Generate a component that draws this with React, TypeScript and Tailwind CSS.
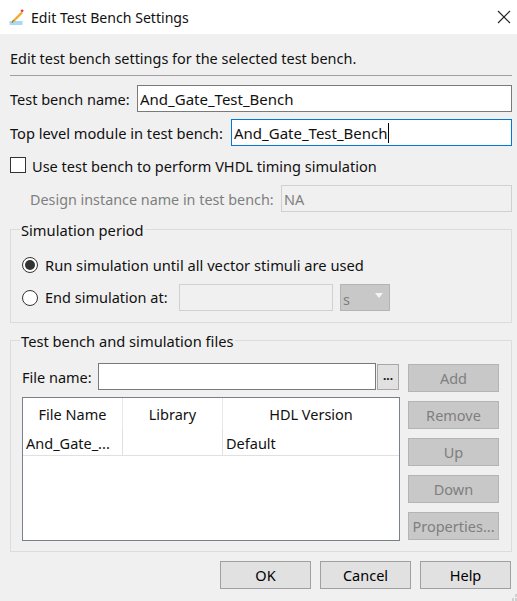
const labelFont = "font-['Noto_Sans',sans-serif] text-[14.5px] leading-[19px]";

function GrayButton({ label }: { label: string }) {
  return (
    <div className="flex h-[28px] w-[91px] items-center justify-center whitespace-nowrap border border-[#b4b4b4] bg-[#c8c8c8] text-[#7f7f7f]">
      {label}
    </div>
  );
}

function DialogButton({ label }: { label: string }) {
  return (
    <div className="flex h-[28px] w-[91px] items-center justify-center border border-[#a0a0a0] bg-[#e1e1e1] text-[#000]">
      {label}
    </div>
  );
}

function Radio({ checked }: { checked?: boolean }) {
  return (
    <div className="flex h-[16px] w-[16px] shrink-0 items-center justify-center rounded-full border border-[#333] bg-white">
      {checked && <div className="h-[10px] w-[10px] rounded-full bg-[#333]" />}
    </div>
  );
}

export default function App() {
  return (
    <div className={`relative h-[601px] w-[517px] overflow-hidden bg-[#f0f0f0] text-[#111] ${labelFont}`}>
      {/* title bar */}
      <div className="flex h-[34px] items-center justify-between bg-white pl-[9px] pr-[5px]">
        <div className="flex items-center gap-[7px] text-[14.1px]">
          <svg width="15" height="16" viewBox="0 0 15 16">
            <rect x="0.5" y="12" width="13" height="4" fill="#a8daf2" />
            <path d="M4 12.5 L13 3.5" stroke="#f2a833" strokeWidth="2.4" />
            <path d="M12.2 2.7 L14 1" stroke="#e23a3a" strokeWidth="2.4" />
            <path d="M3 14 L4.5 11" stroke="#8a6a3a" strokeWidth="1" />
          </svg>
          <span>Edit Test Bench Settings</span>
        </div>
        <svg width="14" height="14" viewBox="0 0 14 14" className="mr-px">
          <path d="M1 1 L13 13 M13 1 L1 13" stroke="#222" strokeWidth="1.1" fill="none" />
        </svg>
      </div>

      <div className="px-[10px] pr-[5px]">
        <div className="mt-[15px] text-[14.45px]">Edit test bench settings for the selected test bench.</div>
        <div className="mt-[7px] h-px bg-[#a0a0a0]" />

        <div className="mt-[9px] flex h-[27px] items-center justify-between">
          <span className="pt-[2px]">Test bench name:</span>
          <div className="flex h-[27px] w-[375px] items-center border border-[#7a7a7a] bg-white px-[2px] pt-[2px] text-[15px]">
            And_Gate_Test_Bench
          </div>
        </div>
        <div className="mt-[7px] flex h-[27px] items-center justify-between">
          <span className="pt-[2px] text-[14.65px]">Top level module in test bench:</span>
          <div className="flex h-[27px] w-[281px] items-center border border-[#0078d7] bg-white px-[2px] pt-[2px] text-[15px]">
            <span>And_Gate_Test_Bench</span>
            <span className="mb-[2px] h-[20px] w-px bg-black" />
          </div>
        </div>

        <div className="mt-[9px] flex h-[20px] items-center gap-[6px]">
          <div className="h-[16px] w-[16px] border border-[#333] bg-white" />
          <span className="pt-[2px] text-[14.55px]">Use test bench to perform VHDL timing simulation</span>
        </div>

        <div className="mt-[10px] flex h-[27px] items-center justify-between pl-[20px] text-[#7f7f7f]">
          <span className="pt-[2px] text-[14.35px]">Design instance name in test bench:</span>
          <div className="flex h-[27px] w-[231px] items-center border border-[#d0d0d0] px-[2px] pt-[2px]">NA</div>
        </div>

        {/* simulation period */}
        <fieldset className="mt-[7px] h-[104px] border border-[#dcdcdc] px-[11px]">
          <legend className="ml-[-2px] px-[1px] pt-[2px] text-[14.7px]">Simulation period</legend>
          <div className="mt-[15px] flex h-[19px] items-center gap-[7px]">
            <Radio checked />
            <span className="pt-[2px] text-[14.7px]">Run simulation until all vector stimuli are used</span>
          </div>
          <div className="mt-[10px] flex items-center">
            <Radio />
            <span className="ml-[7px] w-[134px]">End simulation at:</span>
            <div className="h-[27px] w-[154px] border border-[#d0d0d0]" />
            <div className="ml-[7px] flex h-[27px] w-[50px] items-center justify-between border border-[#b4b4b4] bg-[#c8c8c8] pl-[2px] pr-[6px] text-[#7f7f7f]">
              <span className="pt-[4px]">s</span>
              <svg width="8" height="5" viewBox="0 0 8 5" className="mb-[4px]">
                <path d="M0 0 H8 L4 5 Z" fill="#f4f4f4" />
              </svg>
            </div>
          </div>
        </fieldset>

        {/* files */}
        <fieldset className="mt-[7px] h-[222px] border border-[#dcdcdc] px-[11px]">
          <legend className="ml-[-2px] px-[1px] pt-[2px] text-[14.7px]">Test bench and simulation files</legend>
          <div className="mt-[12px] flex gap-[8px]">
            <div className="w-[378px]">
              <div className="flex h-[27px] items-center">
                <span className="w-[76px] pt-[2px]">File name:</span>
                <div className="h-[27px] w-[278px] border border-[#7a7a7a] bg-white" />
                <div className="ml-px mt-px flex h-[26px] w-[22px] items-center justify-center border border-[#a8a8a8] bg-[#e1e1e1] pb-[3px] text-[12px] font-bold">
                  ...
                </div>
              </div>
              <div className="mt-[7px] h-[144px] border border-[#7a8088] bg-white">
                <div className="grid h-[58px] grid-cols-[100px_100px_1fr] border-b border-[#e0e0e0]">
                  <div className="flex h-[32px] items-center justify-center border-r border-[#e8e8e8]">File Name</div>
                  <div className="flex h-[32px] items-center justify-center border-r border-[#e8e8e8]">Library</div>
                  <div className="flex h-[32px] items-center justify-center">HDL Version</div>
                  <div className="flex h-[25px] items-center border-r border-[#e0e0e0] pl-[3px] pt-[2px]">And_Gate_...</div>
                  <div className="h-[25px] border-r border-[#e0e0e0]" />
                  <div className="flex h-[25px] items-center pl-[3px] pt-[2px]">Default</div>
                </div>
              </div>
            </div>
            <div className="flex flex-col gap-[9px] pt-[1px]">
              <GrayButton label="Add" />
              <GrayButton label="Remove" />
              <GrayButton label="Up" />
              <GrayButton label="Down" />
              <GrayButton label="Properties..." />
            </div>
          </div>
        </fieldset>

        <div className="mt-[9px] flex justify-end gap-[9px] pr-px">
          <DialogButton label="OK" />
          <DialogButton label="Cancel" />
          <DialogButton label="Help" />
        </div>
      </div>

      {/* size grip */}
      <svg width="5" height="7" viewBox="0 0 5 7" className="absolute bottom-0 right-0">
        <path d="M3 0h2v3H3z M0 4h2v3H0z M3 4h2v3H3z" fill="#d0d0d0" />
      </svg>
    </div>
  );
}
